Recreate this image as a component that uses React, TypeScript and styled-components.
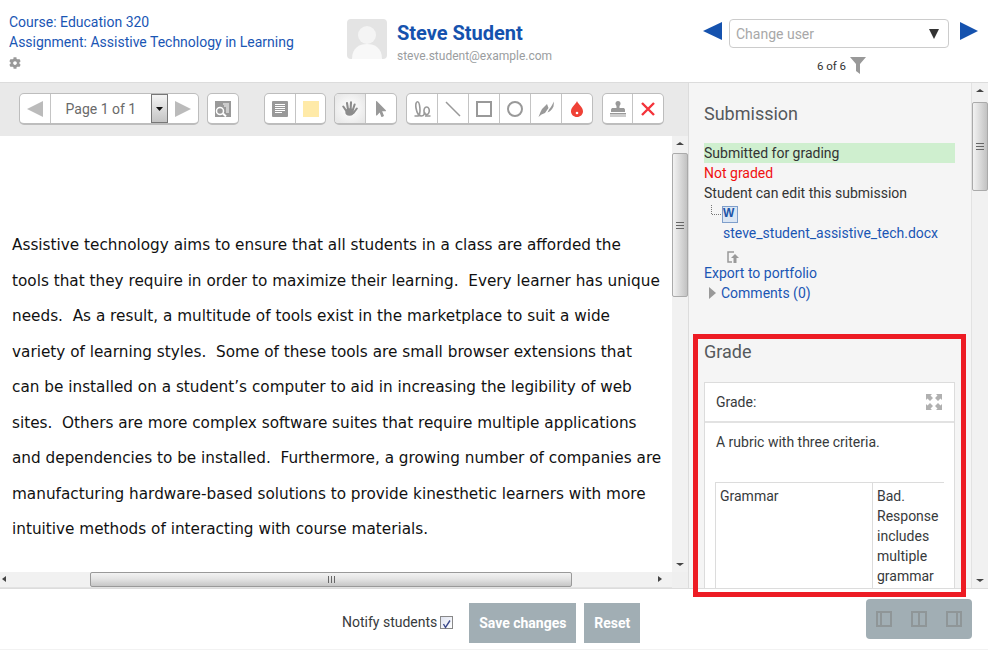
import styled, { createGlobalStyle } from "styled-components";
import { FaCog, FaMousePointer } from "react-icons/fa";

const GlobalStyle = createGlobalStyle`
  html, body {
    margin: 0;
    padding: 0;
    overflow: hidden;
  }
  body {
    font-family: Roboto, "Liberation Sans", sans-serif;
    font-size: 14px;
    color: #373a3c;
    background: #fff;
  }
`;

const Page = styled.div`
  position: relative;
  width: 988px;
  height: 650px;
  display: flex;
  flex-direction: column;
  overflow: hidden;
`;

const Header = styled.header`
  height: 82px;
  flex: none;
  display: flex;
  border-bottom: 1px solid #dcdcdc;
`;

const CourseInfo = styled.div`
  width: 338px;
  flex: none;
  padding: 12px 0 0 9px;
  box-sizing: border-box;
  line-height: 20px;
`;

const Link = styled.a`
  display: block;
  color: #1a56b4;
  white-space: nowrap;
`;

const GearRow = styled.div`
  height: 22px;
  display: flex;
  align-items: center;
  color: #999;
  font-size: 12px;
`;

const StudentBlock = styled.div`
  width: 345px;
  flex: none;
  display: flex;
  padding: 19px 0 0 9px;
  box-sizing: border-box;
  gap: 10px;
`;

const Avatar = styled.div`
  width: 40px;
  height: 40px;
  border-radius: 4px;
  overflow: hidden;
`;

const StudentName = styled.div`
  font-size: 20px;
  font-weight: 700;
  line-height: 28px;
  color: #1552ae;
`;

const StudentEmail = styled.div`
  font-size: 12px;
  line-height: 16px;
  margin-top: 1px;
  color: #9a9da0;
`;

const UserPicker = styled.div`
  flex: 1;
  padding: 19px 0 0 20px;
  display: flex;
  flex-direction: column;
`;

const PickerRow = styled.div`
  display: flex;
  align-items: flex-start;
  gap: 7px;
`;

const ArrowSlot = styled.span`
  display: block;
  height: 18px;
  margin-top: 3px;
`;

const ChangeUser = styled.div`
  width: 220px;
  height: 29px;
  margin-right: 4px;
  box-sizing: border-box;
  border: 1px solid #ccc;
  border-radius: 4px;
  padding: 0 9px 0 6px;
  display: flex;
  align-items: center;
  justify-content: space-between;
  color: #a8a8a8;
`;

const PickerCount = styled.div`
  display: flex;
  align-items: center;
  justify-content: center;
  gap: 4px;
  margin: 9px 0 0 -8px;
  font-size: 11.5px;
  color: #333;
`;

const Main = styled.main`
  height: 505px;
  flex: none;
  display: flex;
`;

const Viewer = styled.section`
  width: 688px;
  flex: none;
  display: flex;
  flex-direction: column;
  background: #e9e9e9;
  border-right: 1px solid #dcdcdc;
`;

const Toolbar = styled.div`
  height: 53px;
  flex: none;
  box-sizing: border-box;
  padding: 10px 0 0 19px;
  display: flex;
  align-items: flex-start;
`;

const ToolGroup = styled.div<{ $gap: number }>`
  display: flex;
  height: 32px;
  box-sizing: border-box;
  margin-right: ${(p) => p.$gap}px;
  background: #fff;
  border: 1px solid #bdbdbd;
  border-bottom-width: 2px;
  border-radius: 5px;
  overflow: hidden;
`;

const ToolButton = styled.div<{ $active?: boolean }>`
  width: 29.9px;
  display: flex;
  align-items: center;
  justify-content: center;
  color: #999;
  & + & {
    border-left: 1px solid #c4c4c4;
  }
  ${(p) =>
    p.$active &&
    "background: radial-gradient(circle, #f8f8f8 30%, #e4e4e4 100%);"}
`;

const PageLabel = styled.div`
  width: 100px;
  border-left: 1px solid #c4c4c4;
  display: flex;
  align-items: center;
  justify-content: center;
  color: #6a6a6a;
  font-size: 14px;
`;

const PageSelect = styled.div`
  width: 17px;
  box-sizing: border-box;
  border: 1px solid #777;
  background: linear-gradient(#f4f4f4, #dcdcdc 50%, #c4c4c4);
  display: flex;
  align-items: center;
  justify-content: center;
`;

const DocArea = styled.div`
  flex: 1;
  min-height: 0;
  display: grid;
  grid-template-columns: 672px 16px;
  grid-template-rows: 436px 16px;
`;

const DocPage = styled.div`
  background: #fff;
  padding-top: 92px;
  box-sizing: border-box;
  overflow: hidden;
`;

const DocLine = styled.div`
  padding-left: 12px;
  height: 35.55px;
  line-height: 35.55px;
  font-family: "DejaVu Sans", sans-serif;
  font-size: 15.27px;
  white-space: pre;
  color: #111;
`;

const ScrollTrackY = styled.div`
  background: #f1f1f1;
  display: flex;
  flex-direction: column;
  align-items: center;
  justify-content: space-between;
  position: relative;
`;

const ThumbY = styled.div<{ $top: number; $height: number }>`
  position: absolute;
  left: 0;
  right: 0;
  top: ${(p) => p.$top}px;
  height: ${(p) => p.$height}px;
  box-sizing: border-box;
  border: 1px solid #aaa;
  border-radius: 2px;
  background: linear-gradient(90deg, #f2f2f2, #d8d8d8 55%, #c2c2c2);
  display: flex;
  align-items: center;
  justify-content: center;
`;

const ScrollTrackX = styled.div`
  background: #f1f1f1;
  position: relative;
  border-bottom: 1px solid #e2e2e2;
  box-sizing: border-box;
`;

const ThumbX = styled.div`
  position: absolute;
  left: 90px;
  top: 0;
  width: 482px;
  height: 15px;
  box-sizing: border-box;
  border: 1px solid #999;
  border-radius: 2px;
  background: linear-gradient(#f2f2f2, #e4e4e4 45%, #c6c6c6);
  display: flex;
  align-items: center;
  justify-content: center;
`;

const Grip = styled.span<{ $vertical?: boolean }>`
  display: block;
  width: ${(p) => (p.$vertical ? "8px" : "7px")};
  height: 7px;
  background: ${(p) =>
    p.$vertical
      ? "repeating-linear-gradient(#666 0 1px, transparent 1px 3px)"
      : "repeating-linear-gradient(90deg, #666 0 1px, transparent 1px 3px)"};
`;

const ArrowX = styled.span<{ $right?: boolean }>`
  position: absolute;
  top: 4px;
  ${(p) => (p.$right ? "right: 10px;" : "left: 2px;")}
  width: 0;
  height: 0;
  border-top: 3px solid transparent;
  border-bottom: 3px solid transparent;
  ${(p) =>
    p.$right ? "border-left: 4px solid #444;" : "border-right: 4px solid #444;"}
`;

const ArrowY = styled.span<{ $down?: boolean }>`
  width: 0;
  height: 0;
  margin: 6px 0;
  border-left: 4px solid transparent;
  border-right: 4px solid transparent;
  ${(p) =>
    p.$down ? "border-top: 3px solid #444;" : "border-bottom: 3px solid #444;"}
`;

const Corner = styled.div`
  background: #efefef;
`;

const Side = styled.aside`
  flex: 1;
  min-width: 0;
  display: flex;
  background: #f5f5f5;
`;

const SideScroll = styled.div`
  flex: 1;
  min-width: 0;
  overflow: hidden;
  padding: 19px 16px 0 15px;
  border-right: 1px solid #e2e2e2;
  line-height: 20px;
`;

const SideScrollBar = styled(ScrollTrackY)`
  width: 16px;
  flex: none;
`;

const SectionTitle = styled.h3<{ $after: number }>`
  margin: 0 0 ${(p) => p.$after}px;
  font-size: 18px;
  font-weight: 400;
  line-height: 24px;
  color: #55595c;
`;

const StatusLine = styled.div<{ $tone?: "ok" | "bad" }>`
  height: 20px;
  white-space: nowrap;
  background: ${(p) => (p.$tone === "ok" ? "#cfefcf" : "transparent")};
  color: ${(p) => (p.$tone === "bad" ? "#f01010" : "#333")};
`;

const FileTree = styled.div`
  padding-left: 7px;
  height: 20px;
  display: flex;
  align-items: flex-end;
`;

const FileLink = styled(Link)`
  margin-left: 19px;
`;

const ExportIconRow = styled.div`
  height: 20px;
  padding: 5px 0 0 23px;
  box-sizing: border-box;
`;

const CommentsRow = styled.div`
  height: 20px;
  margin-bottom: 37px;
  display: flex;
  align-items: center;
  gap: 5px;
  padding-left: 5px;
`;

const Triangle = styled.span`
  width: 0;
  height: 0;
  border-top: 6px solid transparent;
  border-bottom: 6px solid transparent;
  border-left: 7px solid #999;
`;

const GradeCard = styled.div`
  background: #fff;
  border: 1px solid #dcdcdc;
  border-bottom: none;
`;

const CardHead = styled.div`
  height: 40px;
  box-sizing: border-box;
  padding: 0 12px 0 11px;
  display: flex;
  align-items: center;
  justify-content: space-between;
  border-bottom: 2px solid #e2e2e2;
`;

const CardBody = styled.div`
  padding: 9px 10px 0 10px;
`;

const RubricText = styled.div`
  margin: 0 0 30px 1px;
`;

const Rubric = styled.div`
  display: grid;
  grid-template-columns: 157px 72px;
  border-top: 1px solid #dcdcdc;
`;

const RubricCell = styled.div`
  padding: 3px 4px 0;
  height: 110px;
  border-left: 1px solid #dcdcdc;
  overflow: hidden;
`;

const Footer = styled.footer`
  flex: 1;
  display: flex;
  align-items: flex-start;
  padding: 11px 16px 0 342px;
  box-sizing: border-box;
  border-top: 1px solid #dcdcdc;
  border-bottom: 1px solid #f2f2f2;
`;

const Notify = styled.label`
  display: flex;
  align-items: center;
  gap: 3px;
  height: 40px;
  margin: 3px 16px 0 0;
  padding-bottom: 2px;
  box-sizing: border-box;
  color: #373a3c;
`;

const CheckBox = styled.span`
  width: 13px;
  height: 13px;
  box-sizing: border-box;
  border: 1px solid #888;
  background: linear-gradient(135deg, #dfe3f0, #fff);
  display: block;
`;

const SaveButton = styled.button<{ $width: number }>`
  width: ${(p) => p.$width}px;
  height: 40px;
  margin: 3px 8px 0 0;
  padding: 0;
  border: none;
  background: #a1aeb4;
  color: #fff;
  font-family: inherit;
  font-size: 14px;
  font-weight: 700;
`;

const LayoutToggles = styled.div`
  margin-left: auto;
  width: 106px;
  height: 40px;
  margin-top: -1px;
  padding: 0 10px;
  box-sizing: border-box;
  background: #a1aeb4;
  border-radius: 4px;
  display: flex;
  align-items: center;
  justify-content: space-between;
`;

const Highlight = styled.div`
  position: absolute;
  left: 693px;
  top: 334px;
  width: 273px;
  height: 263px;
  box-sizing: border-box;
  border: 5px solid #ed1c24;
  pointer-events: none;
`;

const docLines = [
  "Assistive technology aims to ensure that all students in a class are afforded the",
  "tools that they require in order to maximize their learning.  Every learner has unique",
  "needs.  As a result, a multitude of tools exist in the marketplace to suit a wide",
  "variety of learning styles.  Some of these tools are small browser extensions that",
  "can be installed on a student\u2019s computer to aid in increasing the legibility of web",
  "sites.  Others are more complex software suites that require multiple applications",
  "and dependencies to be installed.  Furthermore, a growing number of companies are",
  "manufacturing hardware-based solutions to provide kinesthetic learners with more",
  "intuitive methods of interacting with course materials.",
];

function Tri({ dir, color, w, h }: { dir: "l" | "r"; color: string; w: number; h: number }) {
  const points = dir === "l" ? `${w},0 ${w},${h} 0,${h / 2}` : `0,0 0,${h} ${w},${h / 2}`;
  return (
    <svg width={w} height={h} viewBox={`0 0 ${w} ${h}`}>
      <polygon points={points} fill={color} />
    </svg>
  );
}

function LayoutIcon({ split }: { split: number }) {
  return (
    <svg width="16" height="16" viewBox="0 0 16 16" fill="none" stroke="#8f9698" strokeWidth="2">
      <rect x="1" y="1" width="14" height="14" />
      <line x1={split} y1="1" x2={split} y2="15" />
    </svg>
  );
}

export default function App() {
  return (
    <Page>
      <GlobalStyle />
      <Header>
        <CourseInfo>
          <Link>Course: Education 320</Link>
          <Link>Assignment: Assistive Technology in Learning</Link>
          <GearRow>
            <FaCog />
          </GearRow>
        </CourseInfo>
        <StudentBlock>
          <Avatar>
            <svg width="40" height="40" viewBox="0 0 40 40">
              <rect width="40" height="40" fill="#e4e4e4" />
              <circle cx="20" cy="16" r="9" fill="#f4f4f4" />
              <path d="M5 40c0-11 7-15 15-15s15 4 15 15z" fill="#f8f8f8" />
            </svg>
          </Avatar>
          <div>
            <StudentName>Steve Student</StudentName>
            <StudentEmail>steve.student@example.com</StudentEmail>
          </div>
        </StudentBlock>
        <UserPicker>
          <PickerRow>
            <ArrowSlot>
              <Tri dir="l" color="#1552ae" w={19} h={18} />
            </ArrowSlot>
            <ChangeUser>
              Change user
              <svg width="10" height="10" viewBox="0 0 10 10">
                <polygon points="0,0 10,0 5,10" fill="#333" />
              </svg>
            </ChangeUser>
            <ArrowSlot>
              <Tri dir="r" color="#1552ae" w={18} h={18} />
            </ArrowSlot>
          </PickerRow>
          <PickerCount>
            6 of 6
            <svg width="16" height="17" viewBox="0 0 16 17">
              <polygon points="0,0 16,0 10,7 10,17 6,14 6,7" fill="#999" />
            </svg>
          </PickerCount>
        </UserPicker>
      </Header>
      <Main>
        <Viewer>
          <Toolbar>
            <ToolGroup $gap={8}>
              <ToolButton>
                <Tri dir="l" color="#bbb" w={16} h={16} />
              </ToolButton>
              <PageLabel>Page 1 of 1</PageLabel>
              <PageSelect>
                <svg width="7" height="4" viewBox="0 0 7 4">
                  <polygon points="0,0 7,0 3.5,4" fill="#111" />
                </svg>
              </PageSelect>
              <ToolButton>
                <Tri dir="r" color="#bbb" w={16} h={16} />
              </ToolButton>
            </ToolGroup>
            <ToolGroup $gap={25}>
              <ToolButton>
                <svg width="16" height="16" viewBox="0 0 16 16">
                  <rect width="16" height="16" fill="#999" />
                  <path d="M8 3h6M9 5h5M11 7h3M11 9h3M11 11h3" stroke="#fff" strokeWidth="1" />
                  <circle cx="5" cy="10" r="3.5" fill="none" stroke="#fff" strokeWidth="1.5" />
                  <path d="M8 12.5l3 3" stroke="#fff" strokeWidth="2" />
                </svg>
              </ToolButton>
            </ToolGroup>
            <ToolGroup $gap={8}>
              <ToolButton>
                <svg width="16" height="16" viewBox="0 0 16 16">
                  <rect width="16" height="16" rx="1" fill="#999" />
                  <path d="M3 3.5h10M3 5.5h10M3 7.5h10M3 9.5h10M3 11.5h7" stroke="#fff" strokeWidth="1" />
                </svg>
              </ToolButton>
              <ToolButton>
                <svg width="16" height="16" viewBox="0 0 16 16">
                  <rect width="16" height="16" fill="#ffeaa8" />
                </svg>
              </ToolButton>
            </ToolGroup>
            <ToolGroup $gap={9}>
              <ToolButton $active>
                <svg width="16" height="16" viewBox="0 0 16 16" fill="none" stroke="#8c8c8c" strokeWidth="2.1" strokeLinecap="round">
                  <path d="M4 9.500L1.300 5.500M6 8.500L5 2M8.600 8.500L9 1.300M10.800 9L12.600 3.500M11.500 12L14.800 7.500" />
                  <ellipse cx="7.600" cy="11" rx="4.300" ry="3.800" fill="#8c8c8c" stroke="none" />
                </svg>
              </ToolButton>
              <ToolButton>
                <FaMousePointer size={16} />
              </ToolButton>
            </ToolGroup>
            <ToolGroup $gap={9}>
              <ToolButton>
                <svg width="17" height="16" viewBox="0 0 17 16" fill="none" stroke="#999" strokeWidth="1.6">
                  <path d="M.5 15h3c2.200 0 2.800-4 2.400-8C5.500 3 5 .8 3.500.8 1.800.8 1.500 4 2 7c.6 3.500 2.500 8 5.500 8 2.500 0 3-2 2.600-4-.4-2 .2-5 2.600-5 2 0 2.800 2.500 2.500 4.500-.3 2-1.300 3-2.500 3s-2.200-1.200-2.200-2.500M11 15h5.500" />
                </svg>
              </ToolButton>
              <ToolButton>
                <svg width="16" height="16" viewBox="0 0 16 16">
                  <line x1="1" y1="1" x2="15" y2="15" stroke="#999" strokeWidth="1.5" />
                </svg>
              </ToolButton>
              <ToolButton>
                <svg width="16" height="16" viewBox="0 0 16 16">
                  <rect x="1" y="1" width="14" height="14" fill="none" stroke="#999" strokeWidth="2" />
                </svg>
              </ToolButton>
              <ToolButton>
                <svg width="16" height="16" viewBox="0 0 16 16">
                  <circle cx="8" cy="8" r="7" fill="none" stroke="#999" strokeWidth="2" />
                </svg>
              </ToolButton>
              <ToolButton>
                <svg width="16" height="16" viewBox="0 0 16 16" fill="#999">
                  <path d="M.5 16L2.500 11 4 8 9 3 10.500 7 7 12 3.500 13.500z" />
                  <path d="M11 8.500C13 6.500 14.500 3 16 .5L15.500 5.500C14.500 8 12.500 10.500 9.500 11.500z" />
                </svg>
              </ToolButton>
              <ToolButton>
                <svg width="12" height="16" viewBox="0 0 12 16">
                  <path d="M6 0c1 3 6 6 6 10.200C12 13.500 9.300 16 6 16s-6-2.500-6-5.800C0 6 5 3 6 0z" fill="#ef4136" />
                  <circle cx="6" cy="12" r="1.300" fill="#fff" />
                </svg>
              </ToolButton>
            </ToolGroup>
            <ToolGroup $gap={0}>
              <ToolButton>
                <svg width="16" height="16" viewBox="0 0 16 16" fill="#999">
                  <circle cx="8" cy="2.500" r="2.500" />
                  <rect x="6.500" y="4" width="3" height="4" />
                  <path d="M1 10c0-1.500 1-2 2-2h10c1 0 2 .5 2 2v2H1z" transform="translate(0 -1)" />
                  <rect y="12" width="16" height="1.500" />
                  <rect y="14.500" width="16" height="1" />
                </svg>
              </ToolButton>
              <ToolButton>
                <svg width="14" height="14" viewBox="0 0 14 14">
                  <path d="M1 1l12 12M13 1L1 13" stroke="#f4333a" strokeWidth="2.400" />
                </svg>
              </ToolButton>
            </ToolGroup>
          </Toolbar>
          <DocArea>
            <DocPage>
              {docLines.map((line) => (
                <DocLine key={line}>{line}</DocLine>
              ))}
            </DocPage>
            <ScrollTrackY>
              <ArrowY />
              <ThumbY $top={17} $height={144}>
                <Grip $vertical />
              </ThumbY>
              <ArrowY $down />
            </ScrollTrackY>
            <ScrollTrackX>
              <ArrowX />
              <ThumbX>
                <Grip />
              </ThumbX>
              <ArrowX $right />
            </ScrollTrackX>
            <Corner />
          </DocArea>
        </Viewer>
        <Side>
          <SideScroll>
            <SectionTitle $after={17}>Submission</SectionTitle>
            <StatusLine $tone="ok">Submitted for grading</StatusLine>
            <StatusLine $tone="bad">Not graded</StatusLine>
            <StatusLine>Student can edit this submission</StatusLine>
            <FileTree>
              <svg width="28" height="18" viewBox="0 0 28 18">
                <path d="M.5 0v9.500H11" fill="none" stroke="#777" strokeDasharray="1 1" />
                <rect x="11.500" y="1.500" width="15" height="16" fill="#dbe6f4" stroke="#7f9fcb" />
                <text x="12" y="12" fontFamily="Liberation Sans" fontSize="12" fontWeight="700" fill="#1c55a8">W</text>
              </svg>
            </FileTree>
            <FileLink>steve_student_assistive_tech.docx</FileLink>
            <ExportIconRow>
              <svg width="12" height="12" viewBox="0 0 12 12">
                <path d="M7 1H1v10h4" fill="none" stroke="#999" strokeWidth="1.500" />
                <path d="M8 3l4 4H9.500v5h-3V7H4z" fill="#999" />
              </svg>
            </ExportIconRow>
            <Link>Export to portfolio</Link>
            <CommentsRow>
              <Triangle />
              <Link>Comments (0)</Link>
            </CommentsRow>
            <SectionTitle $after={18}>Grade</SectionTitle>
            <GradeCard>
              <CardHead>
                Grade:
                <svg width="16" height="16" viewBox="0 0 16 16" fill="#b0b0b0">
                  <path d="M0 0h6L4.500 1.500 7 4 4 7 1.500 4.500 0 6zM16 0v6l-1.500-1.500L12 7 9 4l2.500-2.500L10 0zM0 16v-6l1.500 1.500L4 9l3 3-2.500 2.500L6 16zM16 16h-6l1.500-1.500L9 12l3-3 2.500 2.500L16 10z" />
                </svg>
              </CardHead>
              <CardBody>
                <RubricText>A rubric with three criteria.</RubricText>
                <Rubric>
                  <RubricCell>Grammar</RubricCell>
                  <RubricCell>Bad. Response includes multiple grammar</RubricCell>
                </Rubric>
              </CardBody>
            </GradeCard>
          </SideScroll>
          <SideScrollBar>
            <ArrowY />
            <ThumbY $top={19} $height={89}>
              <Grip $vertical />
            </ThumbY>
            <ArrowY $down />
          </SideScrollBar>
        </Side>
      </Main>
      <Footer>
        <Notify>
          Notify students
          <CheckBox>
            <svg width="11" height="11" viewBox="0 0 11 11">
              <path d="M2.500 5l2 3.500L9 1.500" fill="none" stroke="#3c4a8c" strokeWidth="1.400" />
            </svg>
          </CheckBox>
        </Notify>
        <SaveButton $width={107}>Save changes</SaveButton>
        <SaveButton $width={56}>Reset</SaveButton>
        <LayoutToggles>
          <LayoutIcon split={5} />
          <LayoutIcon split={8} />
          <LayoutIcon split={11} />
        </LayoutToggles>
      </Footer>
      <Highlight />
    </Page>
  );
}
